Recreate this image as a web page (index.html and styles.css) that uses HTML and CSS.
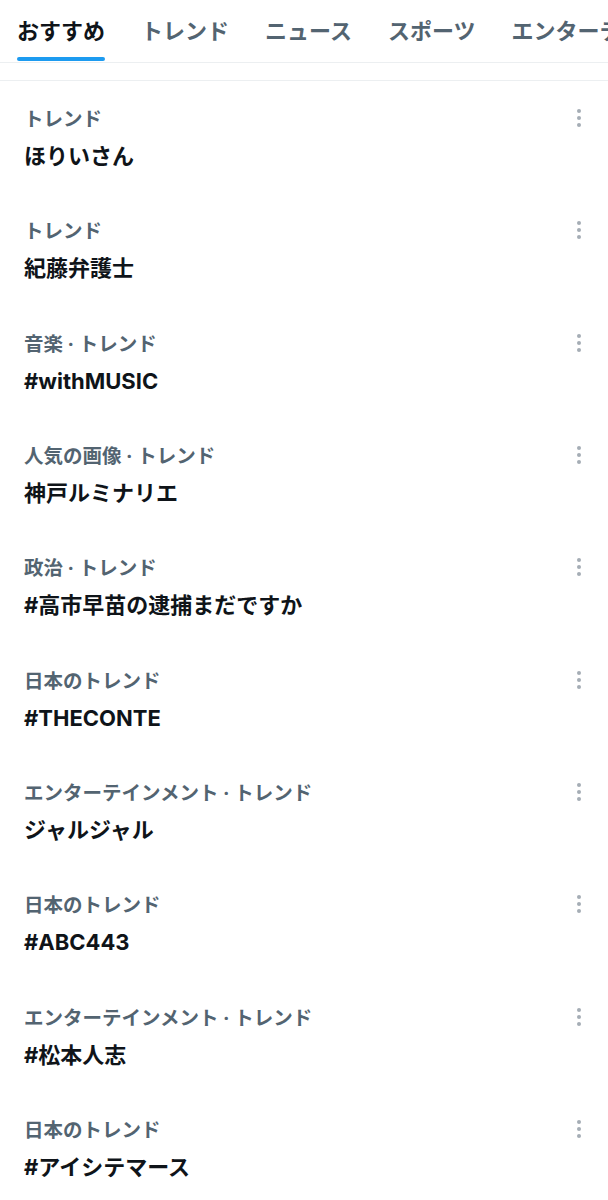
FILE: index.html
```html
<!DOCTYPE html>
<html lang="ja">
<head>
<meta charset="utf-8">
<link rel="stylesheet" href="styles.css">
</head>
<body>
<nav class="tabs">
  <div class="tab active"><span class="tab-label">おすすめ</span><span class="indicator"></span></div>
  <div class="tab"><span class="tab-label">トレンド</span><span class="indicator"></span></div>
  <div class="tab"><span class="tab-label">ニュース</span><span class="indicator"></span></div>
  <div class="tab"><span class="tab-label">スポーツ</span><span class="indicator"></span></div>
  <div class="tab"><span class="tab-label">エンターテインメント</span><span class="indicator"></span></div>
</nav>
<div class="spacer"></div>
<ul class="trends">
  <li class="trend"><div class="text"><div class="meta">トレンド</div><div class="title">ほりいさん</div></div><svg class="more" viewBox="0 0 20 24"><circle cx="10" cy="5" r="2"/><circle cx="10" cy="12" r="2"/><circle cx="10" cy="19" r="2"/></svg></li>
  <li class="trend"><div class="text"><div class="meta">トレンド</div><div class="title">紀藤弁護士</div></div><svg class="more" viewBox="0 0 20 24"><circle cx="10" cy="5" r="2"/><circle cx="10" cy="12" r="2"/><circle cx="10" cy="19" r="2"/></svg></li>
  <li class="trend"><div class="text"><div class="meta">音楽 · トレンド</div><div class="title">#withMUSIC</div></div><svg class="more" viewBox="0 0 20 24"><circle cx="10" cy="5" r="2"/><circle cx="10" cy="12" r="2"/><circle cx="10" cy="19" r="2"/></svg></li>
  <li class="trend"><div class="text"><div class="meta">人気の画像 · トレンド</div><div class="title">神戸ルミナリエ</div></div><svg class="more" viewBox="0 0 20 24"><circle cx="10" cy="5" r="2"/><circle cx="10" cy="12" r="2"/><circle cx="10" cy="19" r="2"/></svg></li>
  <li class="trend"><div class="text"><div class="meta">政治 · トレンド</div><div class="title">#高市早苗の逮捕まだですか</div></div><svg class="more" viewBox="0 0 20 24"><circle cx="10" cy="5" r="2"/><circle cx="10" cy="12" r="2"/><circle cx="10" cy="19" r="2"/></svg></li>
  <li class="trend"><div class="text"><div class="meta">日本のトレンド</div><div class="title">#THECONTE</div></div><svg class="more" viewBox="0 0 20 24"><circle cx="10" cy="5" r="2"/><circle cx="10" cy="12" r="2"/><circle cx="10" cy="19" r="2"/></svg></li>
  <li class="trend"><div class="text"><div class="meta">エンターテインメント · トレンド</div><div class="title">ジャルジャル</div></div><svg class="more" viewBox="0 0 20 24"><circle cx="10" cy="5" r="2"/><circle cx="10" cy="12" r="2"/><circle cx="10" cy="19" r="2"/></svg></li>
  <li class="trend"><div class="text"><div class="meta">日本のトレンド</div><div class="title">#ABC443</div></div><svg class="more" viewBox="0 0 20 24"><circle cx="10" cy="5" r="2"/><circle cx="10" cy="12" r="2"/><circle cx="10" cy="19" r="2"/></svg></li>
  <li class="trend"><div class="text"><div class="meta">エンターテインメント · トレンド</div><div class="title">#松本人志</div></div><svg class="more" viewBox="0 0 20 24"><circle cx="10" cy="5" r="2"/><circle cx="10" cy="12" r="2"/><circle cx="10" cy="19" r="2"/></svg></li>
  <li class="trend"><div class="text"><div class="meta">日本のトレンド</div><div class="title">#アイシテマース</div></div><svg class="more" viewBox="0 0 20 24"><circle cx="10" cy="5" r="2"/><circle cx="10" cy="12" r="2"/><circle cx="10" cy="19" r="2"/></svg></li>
</ul>
</body>
</html>
```
FILE: styles.css
```css
* { box-sizing: border-box; }
html, body {
  margin: 0;
  padding: 0;
  background: #ffffff;
  font-family: "Inter", "Noto Sans CJK JP", sans-serif;
  color: #0f1419;
}
.tabs {
  display: flex;
  gap: 36px;
  padding: 16px 0 1px 17px;
  border-bottom: 1px solid #eceff1;
  overflow: hidden;
  white-space: nowrap;
}
.tab {
  display: flex;
  flex-direction: column;
  flex-shrink: 0;
}
.tab-label {
  font-size: 22px;
  line-height: 30px;
  font-weight: 700;
  color: #536471;
}
.tab.active .tab-label { color: #0f1419; }
.indicator {
  display: block;
  margin-top: 11px;
  height: 4px;
  border-radius: 2px;
  background: transparent;
}
.tab.active .indicator { background: #1d9bf0; }
.spacer {
  height: 18px;
  border-bottom: 1px solid #eceff1;
}
.trends {
  list-style: none;
  margin: 0;
  padding: 0;
}
.trend {
  display: flex;
  align-items: flex-start;
  justify-content: space-between;
  padding: 25px 19px 23.33px 24px;
}
.text {
  display: flex;
  flex-direction: column;
  gap: 12px;
}
.meta {
  font-size: 19.5px;
  line-height: 24px;
  font-weight: 700;
  color: #536471;
  padding-top: 1px;
  margin-bottom: -1px;
}
.title {
  font-size: 22px;
  line-height: 28px;
  font-weight: 700;
  color: #0f1419;
}
.more {
  width: 20px;
  height: 24px;
  fill: #a5adb5;
}
```
